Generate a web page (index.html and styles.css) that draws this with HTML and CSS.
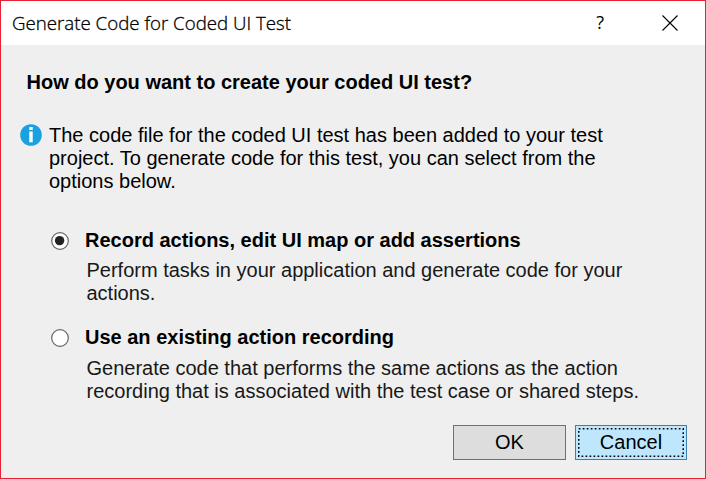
FILE: index.html
```
<!DOCTYPE html>
<html lang="en">
<head>
<meta charset="utf-8">
<title>Generate Code for Coded UI Test</title>
<link rel="stylesheet" href="styles.css">
</head>
<body>
<main class="dialog">
  <header class="titlebar">
    <span class="title">Generate Code for Coded UI Test</span>
    <span class="help">?</span>
    <svg class="close" width="16" height="16" viewBox="0 0 16 16"><path d="M.5.5l15 15M15.5.5l-15 15"/></svg>
  </header>
  <section class="content">
    <h1 class="heading">How do you want to create your coded UI test?</h1>
    <div class="info">
      <svg class="info-icon" width="22" height="22" viewBox="0 0 22 22"><circle cx="11" cy="11" r="10.8" fill="#1ba1e2"/><path d="M9.3 3h3.4v3H9.3zM9.3 7.5h3.4v10.7H9.3z" fill="#fff"/></svg>
      <p class="info-text">The code file for the coded UI test has been added to your test<br>project. To generate code for this test, you can select from the<br>options below.</p>
    </div>
    <label class="option">
      <svg class="radio" width="18" height="18" viewBox="0 0 18 18"><circle class="ring" cx="9" cy="9" r="8.3"/><circle class="dot" cx="8.6" cy="8.6" r="4.7"/></svg>
      <span class="option-title">Record actions, edit UI map or add assertions</span>
      <span class="option-text">Perform tasks in your application and generate code for your<br>actions.</span>
    </label>
    <label class="option second">
      <svg class="radio" width="18" height="18" viewBox="0 0 18 18"><circle class="ring" cx="9" cy="9" r="8.3"/></svg>
      <span class="option-title">Use an existing action recording</span>
      <span class="option-text">Generate code that performs the same actions as the action<br>recording that is associated with the test case or shared steps.</span>
    </label>
  </section>
  <footer class="actions">
    <button class="btn">OK</button>
    <button class="btn primary"><svg class="focus" width="106" height="29" viewBox="0 0 106 29"><rect x=".75" y=".75" width="104.5" height="27.5"/></svg><span>Cancel</span></button>
  </footer>
</main>
</body>
</html>
```
FILE: styles.css
```
* { box-sizing: border-box; }
body {
  margin: 0;
  font: 20px/23px "Liberation Sans", Arial, sans-serif;
  color: #000;
}
.dialog {
  width: 706px;
  height: 479px;
  border: 1px solid #e81f35;
  background: #efefef;
  display: flex;
  flex-direction: column;
  white-space: nowrap;
}
.titlebar {
  height: 44px;
  flex: none;
  background: #fff;
  display: flex;
  align-items: center;
  padding: 0 27px 0 11px;
  font-family: "Open Sans", "Noto Sans", sans-serif;
  font-size: 18.7px;
  font-weight: 300;
}
.title { flex: 1; padding-bottom: 2px; -webkit-text-stroke: 0.3px #000; }
.help { margin-right: 58px; padding-bottom: 2px; font-weight: 400; font-size: 18px; }
.close { fill: none; stroke: #000; stroke-width: 1.1; }
.content { flex: 1; padding: 26px 0 0 19px; }
.heading { margin: 0 0 30px 6.5px; font-size: 20px; line-height: 23px; }
.info { display: flex; gap: 7px; }
.info-text { margin: 0; }
.option {
  display: grid;
  grid-template-columns: 34px 1fr;
  padding-left: 31px;
  margin-top: 36px;
}
.second { margin-top: 21px; }
.radio { margin-top: 3px; }
.ring { fill: #fff; stroke: #666; stroke-width: 1.2; }
.dot { fill: #222; }
.option-title { font-weight: bold; }
.option-text { grid-column: 2; margin: 7px 0 0 1.5px; color: #181818; }
.second .option-text { margin-top: 8px; }
.actions { display: flex; justify-content: flex-end; gap: 9px; padding: 0 18px 18px; }
.btn {
  width: 113px;
  height: 35px;
  padding: 0;
  border: 1px solid #707070;
  background: #ddd;
  font: inherit;
  color: #000;
}
.primary {
  width: 112px;
  position: relative;
  border-color: #3c7fb1;
  background: #bee6fd;
}
.focus {
  position: absolute;
  inset: 2px;
  fill: none;
  stroke: #000;
  stroke-width: 1.5;
  stroke-dasharray: 1.7 2.3;
}
```
